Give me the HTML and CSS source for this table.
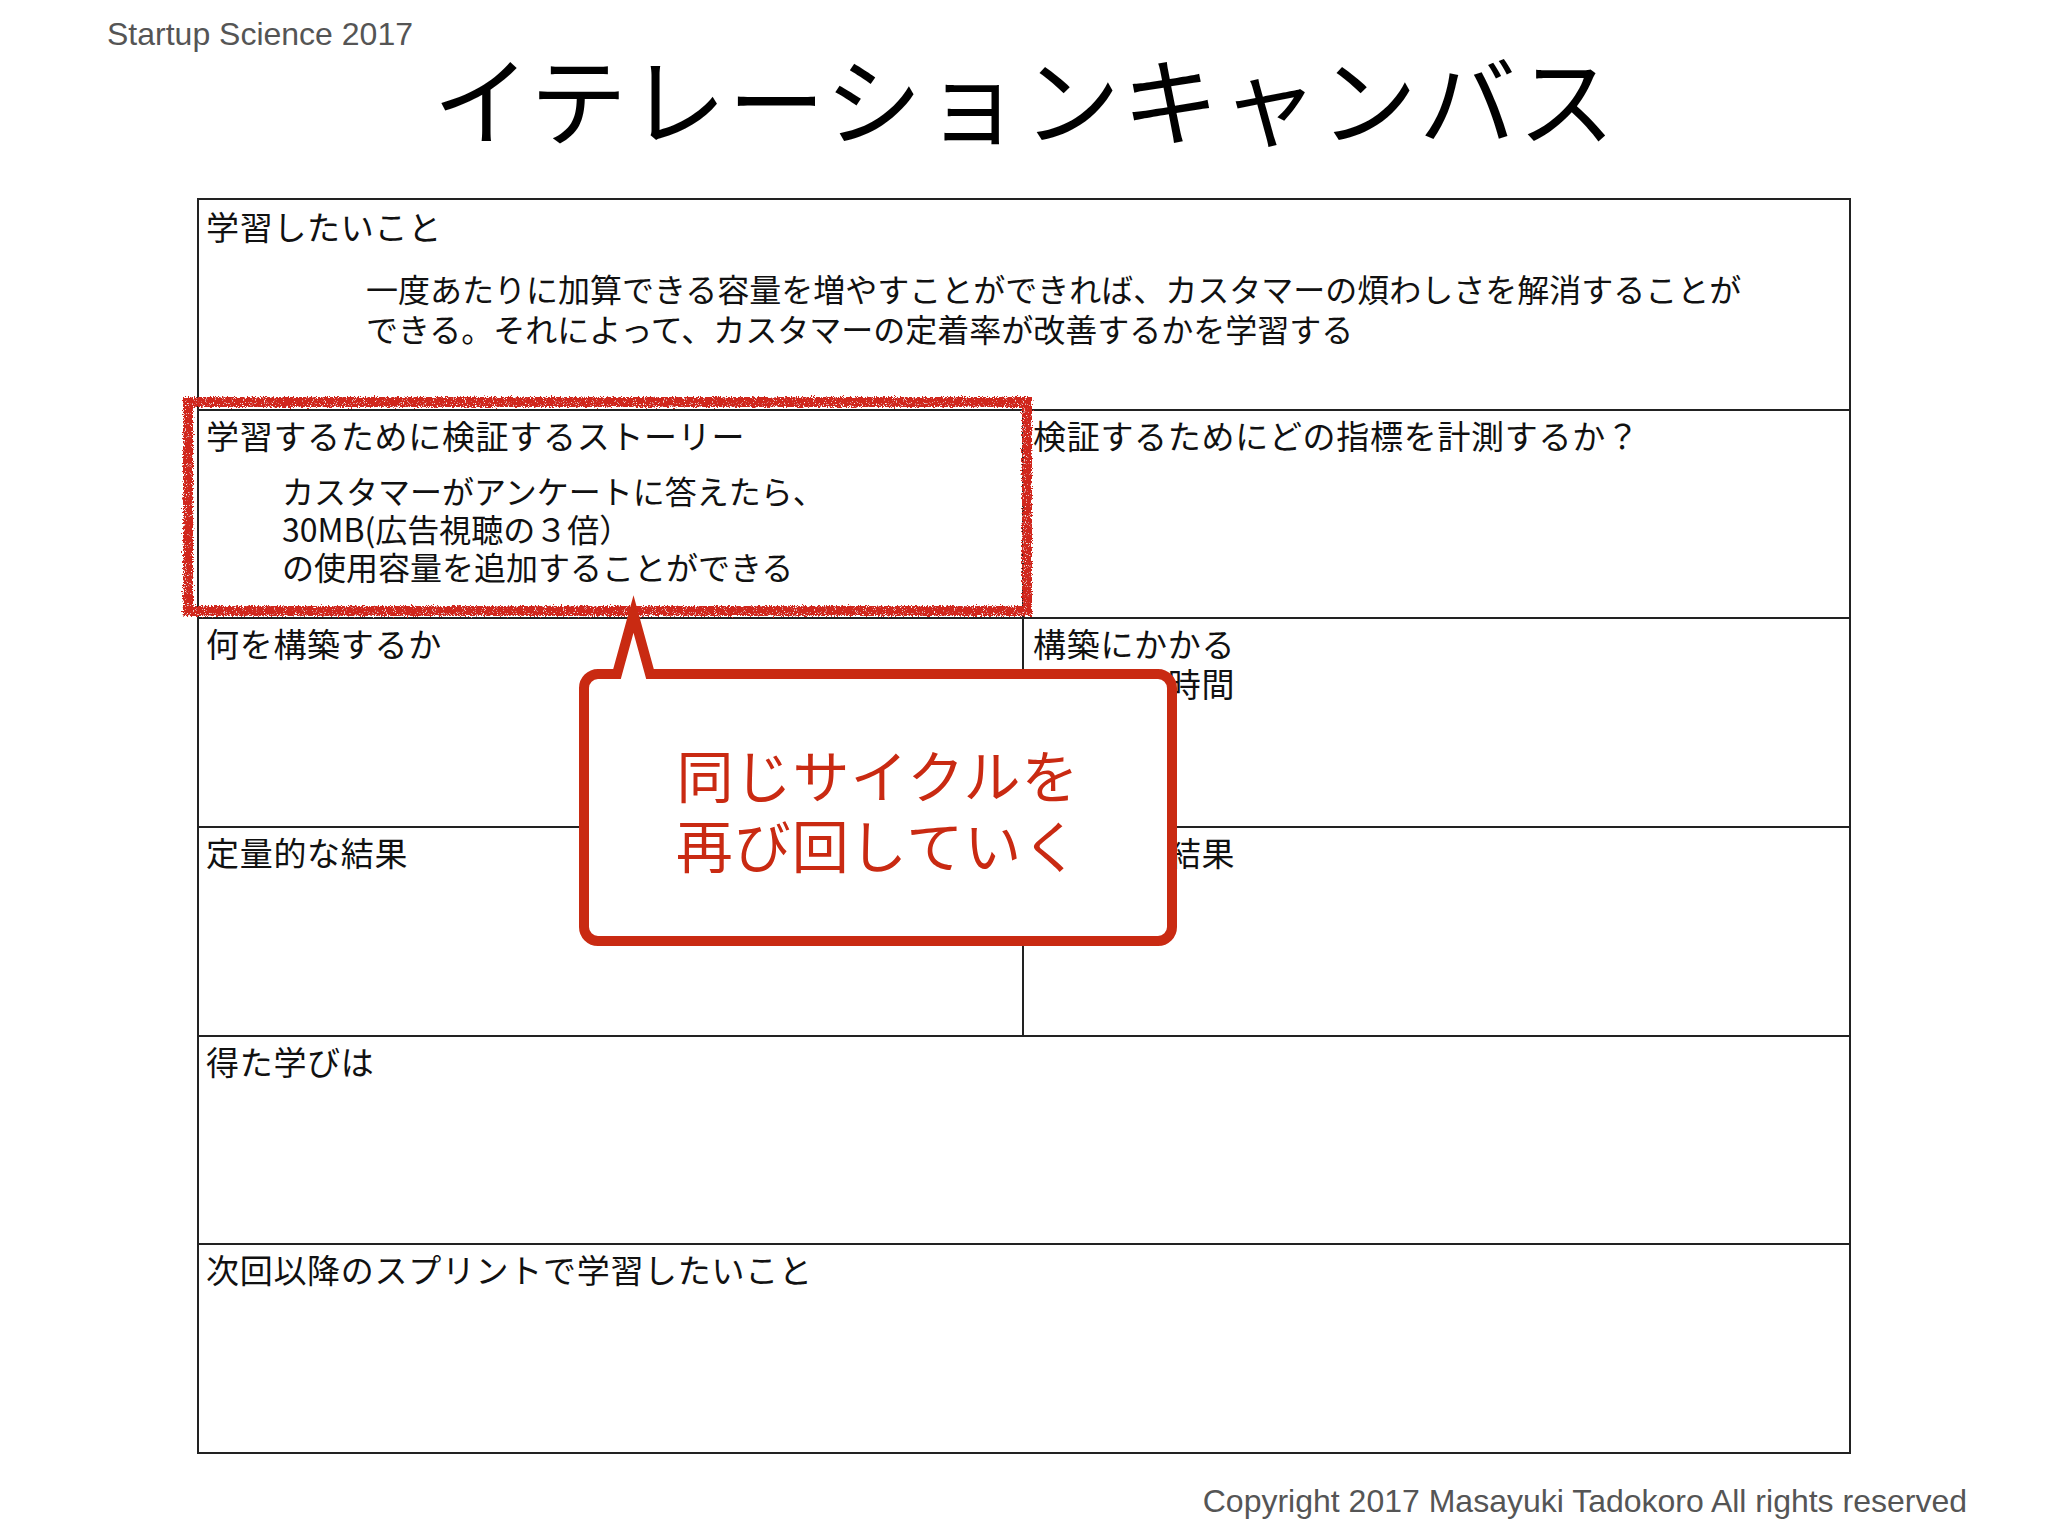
FILE: index.html
```html
<!DOCTYPE html>
<html lang="ja">
<head>
<meta charset="utf-8">
<title>イテレーションキャンバス</title>
<link rel="stylesheet" href="styles.css">
</head>
<body>
<div class="page">
  <header class="header">
    <div class="brand">Startup Science 2017</div>
    <h1 class="title">イテレーションキャンバス</h1>
  </header>

  <main class="canvas">
    <section class="cell wide">
      <div class="label">学習したいこと</div>
      <p class="body body-learn">一度あたりに加算できる容量を増やすことができれば、カスタマーの煩わしさを解消することが<br>できる。それによって、カスタマーの定着率が改善するかを学習する</p>
    </section>
    <section class="cell left">
      <div class="label">学習するために検証するストーリー</div>
      <p class="body body-story">カスタマーがアンケートに答えたら、<br>30MB(広告視聴の３倍）<br>の使用容量を追加することができる</p>
    </section>
    <section class="cell right">
      <div class="label">検証するためにどの指標を計測するか？</div>
    </section>
    <section class="cell left">
      <div class="label">何を構築するか</div>
    </section>
    <section class="cell right">
      <div class="label two-line">構築にかかる<br>コストと時間</div>
    </section>
    <section class="cell left">
      <div class="label">定量的な結果</div>
    </section>
    <section class="cell right">
      <div class="label">定性的な結果</div>
    </section>
    <section class="cell wide">
      <div class="label">得た学びは</div>
    </section>
    <section class="cell wide">
      <div class="label">次回以降のスプリントで学習したいこと</div>
    </section>
  </main>

  <footer class="copyright">Copyright 2017 Masayuki Tadokoro All rights reserved</footer>

  <svg class="overlay" viewBox="0 0 2048 1536" width="2048" height="1536" aria-hidden="true">
    <defs>
      <filter id="rough" x="-3%" y="-8%" width="106%" height="116%">
        <feTurbulence type="fractalNoise" baseFrequency="0.7" numOctaves="2" seed="4" result="noise"/>
        <feDisplacementMap in="SourceGraphic" in2="noise" scale="6" xChannelSelector="R" yChannelSelector="G" result="disp"/>
        <feTurbulence type="fractalNoise" baseFrequency="1.1" numOctaves="1" seed="9" result="noise2"/>
        <feColorMatrix in="noise2" type="matrix" values="0 0 0 0 1  0 0 0 0 1  0 0 0 0 1  0 0 0 -6 2.3" result="speck"/>
        <feComposite in="speck" in2="disp" operator="in" result="speckIn"/>
        <feMerge>
          <feMergeNode in="disp"/>
          <feMergeNode in="speckIn"/>
        </feMerge>
      </filter>
    </defs>
    <rect class="scribble" x="188" y="402" width="839" height="209" filter="url(#rough)"/>
    <path class="bubble" d="M 598 674 L 617 674 L 633.5 614 L 650 674 L 1158 674 A 14 14 0 0 1 1172 688 L 1172 927 A 14 14 0 0 1 1158 941 L 598 941 A 14 14 0 0 1 584 927 L 584 688 A 14 14 0 0 1 598 674 Z"/>
  </svg>

  <div class="callout-text">同じサイクルを<br>再び回していく</div>
</div>
</body>
</html>
```

FILE: styles.css
```css
* {
  box-sizing: border-box;
}

html,
body {
  margin: 0;
  padding: 0;
  background: #ffffff;
}

body {
  font-family: "Noto Sans CJK JP", "Noto Sans", sans-serif;
  color: #111111;
}

.page {
  position: relative;
  width: 2048px;
  height: 1536px;
  overflow: hidden;
}

.brand {
  font-family: "Liberation Sans", Arial, sans-serif;
  font-size: 32px;
  line-height: 30px;
  color: #555555;
  padding: 19px 0 0 107px;
}

.title {
  margin: -3px 0 0;
  font-weight: 400;
  font-size: 97px;
  line-height: 100px;
  letter-spacing: 2px;
  padding-left: 2px;
  text-align: center;
  color: #000000;
}

.canvas {
  margin: 52px 0 0 197px;
  width: 1654px;
  height: 1256px;
  border: 2px solid #222222;
  display: grid;
  grid-template-columns: 1fr 1fr;
  grid-template-rows: repeat(6, 1fr);
}

.cell {
  border-top: 2px solid #222222;
  padding: 2px 10px 0 7px;
  min-width: 0;
  overflow: hidden;
}

.cell:first-child {
  border-top: 0;
  padding-top: 4px;
}

.cell.wide {
  grid-column: 1 / -1;
}

.cell.left {
  border-right: 2px solid #222222;
}

.cell.right {
  padding-left: 9px;
}

.label {
  font-size: 33px;
  line-height: 44px;
  letter-spacing: 0.7px;
  white-space: nowrap;
}

.label.two-line {
  line-height: 40px;
  padding-top: 2px;
}

.body {
  margin: 0;
  font-size: 32px;
  white-space: nowrap;
}

.body-learn {
  line-height: 40px;
  margin: 20px 0 0 160px;
}

.body-story {
  line-height: 38px;
  margin: 14px 0 0 76px;
}

.copyright {
  font-family: "Liberation Sans", Arial, sans-serif;
  font-size: 32px;
  line-height: 36px;
  color: #555555;
  text-align: right;
  padding-right: 81px;
  margin-top: 29px;
}

.overlay {
  position: absolute;
  left: 0;
  top: 0;
  pointer-events: none;
}

.scribble {
  fill: none;
  stroke: #d0271b;
  stroke-width: 10;
}

.bubble {
  fill: #ffffff;
  stroke: #c92a12;
  stroke-width: 10;
  stroke-linejoin: miter;
  stroke-miterlimit: 10;
}

.callout-text {
  position: absolute;
  left: 579px;
  top: 669px;
  width: 598px;
  height: 277px;
  display: flex;
  align-items: center;
  justify-content: center;
  text-align: center;
  color: #c92a12;
  font-size: 57px;
  line-height: 70px;
  letter-spacing: 1px;
}
```
